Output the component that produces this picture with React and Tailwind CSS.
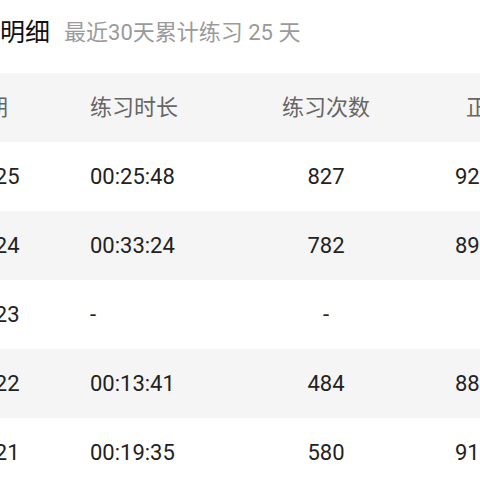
const rows = [
  { date: "09-25", time: "00:25:48", count: "827", rate: "92%" },
  { date: "09-24", time: "00:33:24", count: "782", rate: "89%" },
  { date: "09-23", time: "-", count: "-", rate: "" },
  { date: "09-22", time: "00:13:41", count: "484", rate: "88%" },
  { date: "09-21", time: "00:19:35", count: "580", rate: "91%" },
];

const font = "font-['Roboto','Noto_Sans_CJK_SC',sans-serif]";

function Row({ cells, header, shade }) {
  return (
    <div
      className={`flex items-center h-[69px] shrink-0 ${shade ? "bg-[#f5f5f5]" : "bg-white"} ${
        header ? "text-[#666]" : "text-[#222]"
      } text-[22px] leading-none`}
    >
      <div className="w-[126px] shrink-0">{cells[0]}</div>
      <div className="w-[146px] shrink-0 whitespace-nowrap">{cells[1]}</div>
      <div className="w-[180px] shrink-0 text-center">{cells[2]}</div>
      <div className={`shrink-0 whitespace-nowrap ${header ? "pl-[50px]" : "pl-[39px]"}`}>{cells[3]}</div>
    </div>
  );
}

export default function App() {
  return (
    <div className={`w-[480px] h-[480px] overflow-hidden bg-white ${font}`}>
      <div className="flex items-center h-[73px] pb-[8px] gap-[14px]">
        <span className="text-[25px] leading-none text-[#111]">明细</span>
        <span className="text-[22px] leading-none text-[#9a9a9a] whitespace-nowrap">最近30天累计练习 25 天</span>
      </div>
      <div className="flex flex-col ml-[-36px] w-[560px]">
        <Row header shade cells={["日期", "练习时长", "练习次数", "正确率"]} />
        {rows.map((r, i) => (
          <Row key={r.date} shade={i % 2 === 1} cells={[r.date, r.time, r.count, r.rate]} />
        ))}
      </div>
    </div>
  );
}
